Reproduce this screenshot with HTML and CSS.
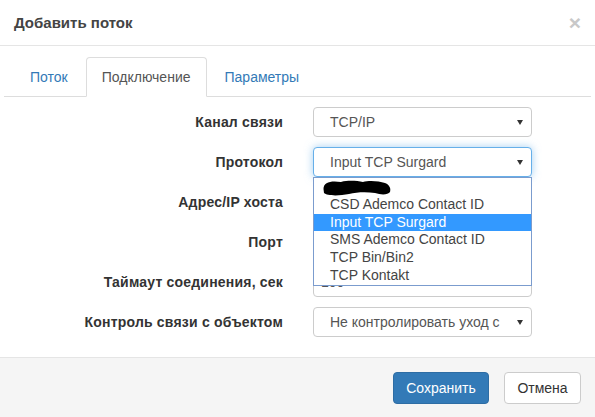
FILE: index.html
```html
<!DOCTYPE html>
<html lang="ru">
<head>
<meta charset="utf-8">
<title>Добавить поток</title>
<link rel="stylesheet" href="styles.css">
</head>
<body>
<div class="modal">
  <div class="modal-header">
    <h4 class="modal-title">Добавить поток</h4>
    <span class="close">×</span>
  </div>
  <div class="modal-body">
    <ul class="nav-tabs">
      <li><a>Поток</a></li>
      <li class="active"><a>Подключение</a></li>
      <li><a>Параметры</a></li>
    </ul>
    <div class="form">
      <label class="form-label">Канал связи</label>
      <div class="select"><span class="select-text">TCP/IP</span><span class="caret"></span></div>

      <label class="form-label">Протокол</label>
      <div class="select-wrap">
        <div class="select focus"><span class="select-text">Input TCP Surgard</span><span class="caret"></span></div>
        <div class="dropdown">
          <div class="option"><svg class="redact" width="68" height="16" viewBox="0 0 68 16"><path d="M0.5,9 C0.5,2 8,0.5 18,2 C26,0 34,1 40,2 C46,0 56,1 62,3 C67,5 68,9 67,12 C65,15 58,15 52,13 C44,12 34,12 26,14 C16,16 4,16 1,13 Z" fill="#000"/></svg></div>
          <div class="option">CSD Ademco Contact ID</div>
          <div class="option selected">Input TCP Surgard</div>
          <div class="option">SMS Ademco Contact ID</div>
          <div class="option">TCP Bin/Bin2</div>
          <div class="option">TCP Kontakt</div>
        </div>
      </div>

      <label class="form-label">Адрес/IP хоста</label>
      <div class="input"></div>

      <label class="form-label">Порт</label>
      <div class="input"></div>

      <label class="form-label">Таймаут соединения, сек</label>
      <div class="input">100</div>

      <label class="form-label">Контроль связи с объектом</label>
      <div class="select"><span class="select-text clip">Не контролировать уход с объекта</span><span class="caret"></span></div>
    </div>
  </div>
  <div class="modal-footer">
    <button class="btn btn-primary">Сохранить</button>
    <button class="btn btn-default">Отмена</button>
  </div>
</div>
</body>
</html>
```

FILE: styles.css
```css
html, body {
  margin: 0;
  padding: 0;
  background: #fff;
}

body {
  font-family: "Liberation Sans", Arial, sans-serif;
  font-size: 14px;
  color: #333;
}

.modal {
  width: 595px;
  height: 417px;
  display: flex;
  flex-direction: column;
  overflow: hidden;
}

.modal-header {
  height: 45px;
  border-bottom: 1px solid #e5e5e5;
  display: flex;
  align-items: center;
  justify-content: space-between;
  padding: 0 14px 0 14px;
  flex: none;
}

.modal-title {
  margin: 0;
  font-size: 15px;
  font-weight: bold;
  color: #444;
}

.close {
  font-size: 21px;
  font-weight: bold;
  line-height: 1;
  color: #c8c8c8;
}

.modal-body {
  flex: none;
  padding: 11px 4px 20px 4px;
}

.nav-tabs {
  list-style: none;
  margin: 0;
  padding: 0 0 0 10px;
  display: flex;
  border-bottom: 1px solid #ddd;
}

.nav-tabs li {
  margin-right: 2px;
  margin-bottom: -1px;
}

.nav-tabs a {
  display: block;
  padding: 9px 15px;
  line-height: 20px;
  border: 1px solid transparent;
  border-radius: 4px 4px 0 0;
  color: #337ab7;
}

.nav-tabs .active a {
  color: #555;
  background: #fff;
  border-color: #ddd #ddd transparent #ddd;
}

.form {
  display: grid;
  grid-template-columns: 279px 219px;
  column-gap: 30px;
  row-gap: 10px;
  grid-auto-rows: 30px;
  padding-top: 10px;
}

.form-label {
  font-weight: bold;
  font-size: 14px;
  letter-spacing: 0.2px;
  color: #333;
  text-align: right;
  align-self: center;
}

.select,
.input {
  box-sizing: border-box;
  height: 30px;
  border: 1px solid #ccc;
  border-radius: 4px;
  background: #fff;
  color: #555;
  font-size: 14px;
  display: flex;
  align-items: center;
}

.select {
  padding: 0 8px 0 16px;
}

.input {
  padding: 0 8px 0 7px;
}

.select.focus {
  border-color: #66afe9;
  box-shadow: 0 0 8px rgba(102, 175, 233, 0.6);
}

.select-text {
  white-space: nowrap;
  flex: 1;
}

.select-text.clip {
  overflow: hidden;
  flex: none;
  width: 172px;
}

.caret {
  margin-left: auto;
  width: 0;
  height: 0;
  border-left: 3px solid transparent;
  border-right: 3px solid transparent;
  border-top: 5px solid #333;
}

.select-wrap {
  position: relative;
}

.dropdown {
  position: absolute;
  left: 0;
  top: 30px;
  width: 219px;
  box-sizing: border-box;
  border: 1px solid #7b9cce;
  background: #fff;
  z-index: 10;
}

.option {
  height: 17.8px;
  line-height: 17.8px;
  padding-left: 16px;
  color: #444;
  white-space: nowrap;
}

.option.selected {
  background: #3399ff;
  color: #fff;
}

.redact {
  display: block;
  margin-left: -7px;
  padding-top: 2px;
}

.modal-footer {
  flex: 1;
  border-top: 1px solid #e5e5e5;
  background: #f5f5f5;
  padding: 14px 14px 0 14px;
  display: flex;
  justify-content: flex-end;
  align-items: flex-start;
  gap: 15px;
}

.btn {
  font-family: "Liberation Sans", Arial, sans-serif;
  font-size: 14px;
  height: 32px;
  padding: 0 12px;
  border-radius: 4px;
  border: 1px solid transparent;
  line-height: 20px;
}

.btn-primary {
  background: #337ab7;
  border-color: #2e6da4;
  color: #fff;
  width: 96px;
}

.btn-default {
  background: #fff;
  border-color: #ccc;
  color: #333;
  width: 77px;
}
```
